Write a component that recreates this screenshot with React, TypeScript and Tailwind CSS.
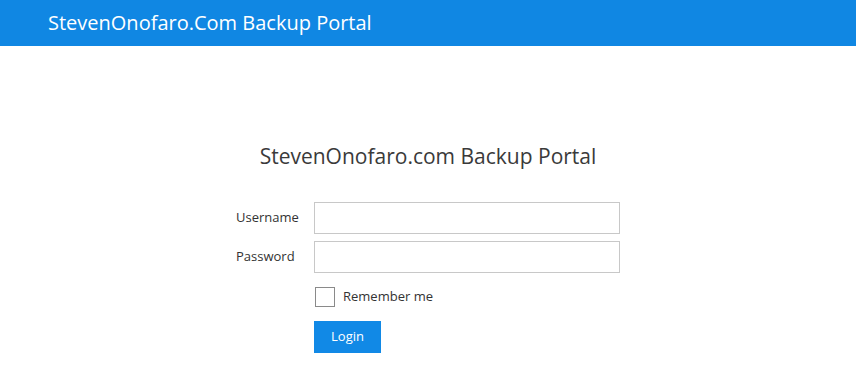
import React from "react";

const App = () => {
  return (
    <div className="min-h-[387px] bg-white font-['Open_Sans',sans-serif]">
      <div className="h-[46px] bg-[#1087e3] flex items-center pl-[48px]">
        <span className="text-white text-[20px] leading-none">StevenOnofaro.Com Backup Portal</span>
      </div>
      <div className="flex flex-col items-center pt-[96px]">
        <h1 className="text-[21px] leading-[28px] text-[#3a3a3a]">StevenOnofaro.com Backup Portal</h1>
        <form className="w-[384px] mt-[32px] flex flex-col gap-[7px]" onSubmit={(e) => e.preventDefault()}>
          <div className="flex items-center">
            <label className="w-[78px] text-[13px] text-[#333]">Username</label>
            <input type="text" className="flex-1 h-[32px] border border-[#c8c8c8] outline-none px-2" />
          </div>
          <div className="flex items-center">
            <label className="w-[78px] text-[13px] text-[#333]">Password</label>
            <input type="password" className="flex-1 h-[32px] border border-[#c8c8c8] outline-none px-2" />
          </div>
          <div className="flex items-center ml-[79px] mt-[7px]">
            <span className="w-[20px] h-[20px] border border-[#8a8a8a] bg-white"></span>
            <span className="ml-[8px] text-[13px] text-[#333]">Remember me</span>
          </div>
          <div className="ml-[78px] mt-[7px]">
            <button type="submit" className="w-[67px] h-[32px] bg-[#1189e6] text-white text-[13px]">Login</button>
          </div>
        </form>
      </div>
    </div>
  );
};

export default App;
